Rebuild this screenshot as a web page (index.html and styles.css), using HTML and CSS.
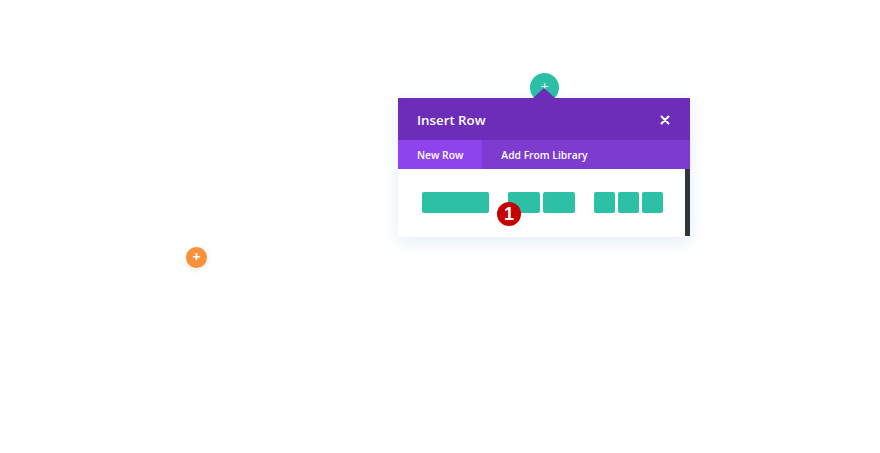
FILE: index.html
```html
<!DOCTYPE html>
<html>
	<head>
		<meta charset="UTF-8">
		<title>Insert Row</title>
		<link rel="stylesheet" href="styles.css">
	</head>
	<body>
		<div class="canvas">
			<a class="add-btn add-module" href="javascript:;">+</a>
			<a class="add-btn add-row" href="javascript:;">+</a>
			<div class="modal">
				<div class="modal-arrow"></div>
				<div class="modal-head">
					<span class="modal-title">Insert Row</span>
					<svg class="modal-close" width="10" height="10" viewBox="0 0 10 10">
						<path d="M1.5 1.5L8.5 8.5M8.5 1.5L1.5 8.5" stroke="#fff" stroke-width="2" stroke-linecap="round"/>
					</svg>
				</div>
				<div class="modal-tabs">
					<a class="tab active" href="javascript:;">New Row</a>
					<a class="tab" href="javascript:;">Add From Library</a>
				</div>
				<div class="modal-body">
					<div class="layouts">
						<div class="layout layout-1">
							<span class="col"></span>
						</div>
						<div class="layout layout-2">
							<span class="col"></span>
							<span class="col"></span>
						</div>
						<div class="layout layout-3">
							<span class="col"></span>
							<span class="col"></span>
							<span class="col"></span>
						</div>
					</div>
					<div class="scrollbar"></div>
					<span class="badge">1</span>
				</div>
			</div>
		</div>
	</body>
</html>
```
FILE: styles.css
```css
*{
	margin: 0;
	padding: 0;
	box-sizing: border-box;
}
body{
	background-color: #fff;
	font-family: "Open Sans", "Noto Sans", sans-serif;
}
.canvas{
	width: 880px;
	height: 453px;
	position: relative;
	overflow: hidden;
}
.add-btn{
	position: absolute;
	border-radius: 50%;
	color: #fff;
	text-decoration: none;
	text-align: center;
	font-weight: 700;
}
/* 绿色的加号按钮，被弹窗的箭头压住一半 */
.add-row{
	left: 530px;
	top: 73px;
	width: 29px;
	height: 29px;
	line-height: 27px;
	font-size: 15px;
	font-weight: 400;
	background-color: #2bc0a5;
}
.add-module{
	left: 186px;
	top: 247px;
	width: 21px;
	height: 21px;
	line-height: 20px;
	font-size: 14px;
	background-color: #f7923a;
	box-shadow: 0 2px 6px rgba(0,0,0,0.08);
}
.modal{
	position: absolute;
	left: 398px;
	top: 98px;
	width: 292px;
	box-shadow: 0 4px 16px rgba(43,135,218,0.14);
}
.modal-arrow{
	position: absolute;
	left: 135px;
	top: -10px;
	width: 0;
	height: 0;
	border-left: 11px solid transparent;
	border-right: 11px solid transparent;
	border-bottom: 10px solid #6c2eb9;
}
.modal-head{
	height: 42px;
	padding: 1px 20px 0 19px;
	display: flex;
	align-items: center;
	justify-content: space-between;
	background-color: #6c2eb9;
	color: #fff;
}
.modal-title{
	font-size: 13.3px;
	font-weight: 600;
}
.modal-close{
	display: block;
}
.modal-tabs{
	height: 29px;
	display: flex;
	background-color: #7e3bd0;
}
.tab{
	display: flex;
	align-items: center;
	padding: 0 19px;
	font-size: 10.3px;
	font-weight: 600;
	color: #fff;
	text-decoration: none;
	white-space: nowrap;
}
.tab.active{
	flex: 0 0 84px;
	background-color: #8f43ec;
}
.modal-body{
	position: relative;
	height: 68px;
	background-color: #fff;
}
.layouts{
	display: flex;
	padding: 23px 0 0 24px;
}
.layout{
	display: flex;
	gap: 3px;
	margin-right: 19px;
}
.col{
	display: block;
	height: 21px;
	border-radius: 2px;
	background-color: #2cc0a6;
}
.layout-1 .col{
	width: 67px;
}
.layout-2 .col{
	width: 32px;
}
.layout-3 .col{
	width: 21px;
}
.scrollbar{
	position: absolute;
	right: 0;
	top: 0;
	width: 5px;
	height: 67px;
	background-color: #2e353c;
}
/* 红色的步骤编号 */
.badge{
	position: absolute;
	left: 99px;
	top: 33px;
	width: 24px;
	height: 24px;
	border-radius: 50%;
	background-color: #c50000;
	color: #fff;
	font-family: "Liberation Sans", Arial, sans-serif;
	font-size: 18px;
	font-weight: 700;
	line-height: 24px;
	text-align: center;
}
```
